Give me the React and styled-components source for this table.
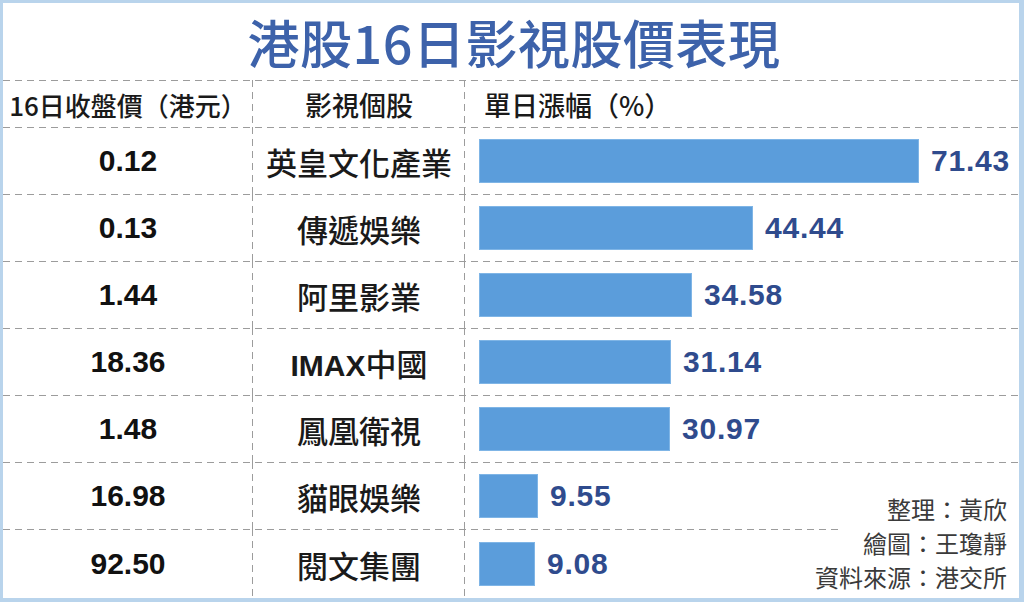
import React from "react";
import styled, { createGlobalStyle } from "styled-components";

const GlobalStyle = createGlobalStyle`
  html, body { margin: 0; padding: 0; background: #ffffff; }
  * { box-sizing: border-box; }
`;

const CJK = `"Noto Sans CJK TC", "Noto Sans CJK SC", sans-serif`;
const NUM = `"Liberation Sans", "Noto Sans CJK TC", sans-serif`;
const DASH = "#9c9c9c";

const Frame = styled.div`
  position: relative;
  width: 1024px;
  height: 602px;
  border-style: solid;
  border-color: #b9d4ec;
  border-width: 3px 5px 4px 3px;
  background: #ffffff;
  display: flex;
  flex-direction: column;
  overflow: hidden;
`;

const Title = styled.h1`
  margin: 0;
  height: 77px;
  flex: none;
  display: flex;
  align-items: center;
  justify-content: center;
  padding-left: 6px;
  font-family: ${CJK};
  font-weight: 500;
  font-size: 52px;
  letter-spacing: 0.5px;
  color: #3d62aa;
`;

const Row = styled.div`
  display: grid;
  grid-template-columns: 250px 212px 1fr;
  height: ${(p) => p.$h}px;
  flex: ${(p) => (p.$last ? "1" : "none")};
  background-image: repeating-linear-gradient(
    to right,
    ${DASH} 0 7px,
    transparent 7px 12px
  );
  background-size: 100% 1px;
  background-repeat: no-repeat;
  background-position: 0 0;
`;

const Cell = styled.div`
  display: flex;
  align-items: center;
  justify-content: ${(p) => p.$justify || "center"};
  padding-left: ${(p) => p.$pl || 0}px;
  padding-top: 1px;
  min-width: 0;
  ${(p) =>
    p.$divider &&
    `
    background-image: repeating-linear-gradient(
      to bottom,
      ${DASH} 0 7px,
      transparent 7px 12px
    );
    background-size: 1px 100%;
    background-repeat: no-repeat;
    background-position: right 0;
  `}
`;

const HeadText = styled.span`
  font-family: ${CJK};
  font-weight: 500;
  font-size: ${(p) => p.$size || 27}px;
  color: #1a1a1a;
  white-space: nowrap;
`;

const Price = styled.span`
  font-family: ${NUM};
  font-weight: 700;
  font-size: 30px;
  color: #111111;
`;

const Name = styled.span`
  font-family: ${CJK};
  font-weight: 500;
  font-size: 31px;
  color: #1a1a1a;
  white-space: nowrap;
`;

const Latin = styled.span`
  font-family: ${NUM};
  font-weight: 700;
  font-size: 30px;
`;

const Bar = styled.div`
  height: 44px;
  background: #5b9ddb;
  border: 1px solid #7fb5e6;
  flex: none;
`;

const Value = styled.span`
  margin-left: 12px;
  font-family: ${NUM};
  font-weight: 700;
  font-size: 30px;
  letter-spacing: 0.8px;
  color: #2f4b8d;
`;

const Credits = styled.div`
  position: absolute;
  right: 0;
  bottom: 0;
  width: 179px;
  height: 106px;
  padding: 0 12px 0 0;
  background: #ffffff;
  display: flex;
  flex-direction: column;
  align-items: flex-end;
  justify-content: flex-start;
`;

const CreditLine = styled.div`
  font-family: ${CJK};
  font-weight: 400;
  font-size: 24px;
  line-height: 34px;
  color: #3a3a3a;
  white-space: nowrap;
`;

const data = [
  { price: "0.12", name: "英皇文化產業", pct: 71.43 },
  { price: "0.13", name: "傳遞娛樂", pct: 44.44 },
  { price: "1.44", name: "阿里影業", pct: 34.58 },
  { price: "18.36", name: "IMAX中國", pct: 31.14 },
  { price: "1.48", name: "鳳凰衛視", pct: 30.97 },
  { price: "16.98", name: "貓眼娛樂", pct: 9.55 },
  { price: "92.50", name: "閱文集團", pct: 9.08 },
];

const PX_PER_UNIT = 6.16;

function renderName(name) {
  if (name.startsWith("IMAX")) {
    return (
      <>
        <Latin>IMAX</Latin>
        {name.slice(4)}
      </>
    );
  }
  return name;
}

export default function App() {
  return (
    <>
      <GlobalStyle />
      <Frame>
        <Title>港股16日影視股價表現</Title>
        <Row $h={47}>
          <Cell $divider>
            <HeadText $size={26}>16日收盤價（港元）</HeadText>
          </Cell>
          <Cell $divider>
            <HeadText>影視個股</HeadText>
          </Cell>
          <Cell $justify="flex-start" $pl={19}>
            <HeadText>單日漲幅（%）</HeadText>
          </Cell>
        </Row>
        {data.map((d, i) => (
          <Row key={d.name} $h={67} $last={i === data.length - 1}>
            <Cell $divider>
              <Price>{d.price}</Price>
            </Cell>
            <Cell $divider>
              <Name>{renderName(d.name)}</Name>
            </Cell>
            <Cell $justify="flex-start" $pl={14}>
              <Bar style={{ width: `${Math.round(d.pct * PX_PER_UNIT)}px` }} />
              <Value>{d.pct.toFixed(2)}</Value>
            </Cell>
          </Row>
        ))}
        <Credits>
          <CreditLine>整理：黃欣</CreditLine>
          <CreditLine>繪圖：王瓊靜</CreditLine>
          <CreditLine>資料來源：港交所</CreditLine>
        </Credits>
      </Frame>
    </>
  );
}
